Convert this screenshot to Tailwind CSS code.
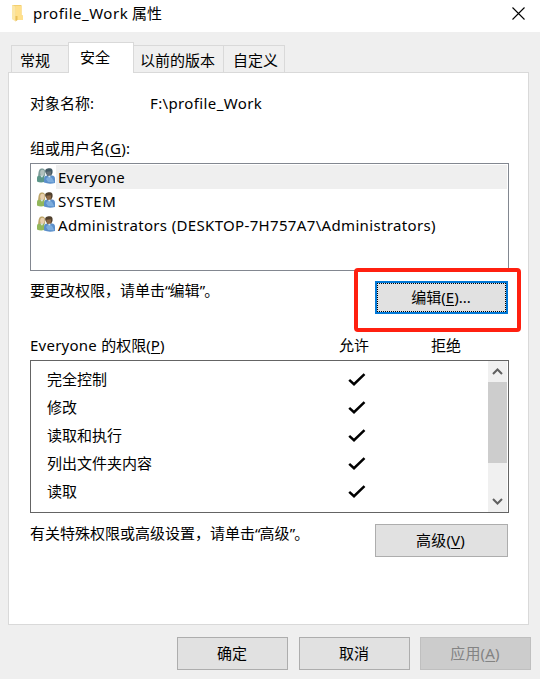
<!DOCTYPE html>
<html lang="zh-CN">
<head>
<meta charset="utf-8">
<title>profile_Work 属性</title>
<script src="https://cdn.jsdelivr.net/npm/@tailwindcss/browser@4"></script>
</head>
<body class="w-[540px] h-[679px] overflow-hidden bg-[#efefef] text-black text-[15px] leading-[20px] whitespace-nowrap font-['Noto_Sans','Noto_Sans_CJK_SC',sans-serif]">
<svg class="hidden">
  <symbol id="check" viewBox="0 0 18 14"><path d="M1.2 6.8 L6 11.2 L16.5 1.2" fill="none" stroke="#000" stroke-width="2.5"/></symbol>
  <symbol id="people" viewBox="0 0 18 17">
    <path d="M0 13.5V10Q0 7.5 3 7.2H7.5V14Q3 15 0 13.5Z" fill="var(--shirt)"/>
    <path d="M1.2 8C1.4 3 2 .5 5 .5S8.6 3 8 7.8Z" fill="var(--hair)"/>
    <ellipse cx="5.4" cy="4.8" rx="2.2" ry="3" fill="var(--face)"/>
    <path d="M3.2 7.4L5 9.8L6.4 7.4" fill="#dfe8ec"/>
    <path d="M7 14.5V11Q7.2 8 10 7.6H15Q18 8 18 11V15Q12 16.5 7 14.5Z" fill="#5b8fcb"/>
    <path d="M9 11L12 8L15 10L17.5 14.5L11 14Z" fill="#7daddd"/>
    <path d="M8.2 4C7.8 1 9.8 .3 12.3 .3S16 1.5 15.5 5L14 8H10.5Z" fill="var(--hair2)"/>
    <path d="M9.2 3.8L13.8 3.2Q14.5 5 13.5 7.5Q11.5 9.5 10 7.2Z" fill="var(--face2)"/>
    <path d="M10.8 8L12.6 9.6L14 7.6" fill="#d9e8f3"/>
  </symbol>
</svg>

<header class="flex h-8 bg-white pl-[11px]">
  <svg class="mt-[4px] w-[13px] h-[18px]" viewBox="0 0 13 18"><path d="M1 1H10.5V11.5H12V16H4L1 15Z" fill="#f3cf70"/><path d="M4.5 2H10.5V11.5H12V16H4.5Z" fill="#ffe08c"/><path d="M1 1L4.5 2.5V17.5L1 15Z" fill="#fbe7a8"/><path d="M4.5 12V17.5L6.5 16V12Z" fill="#e9bf57"/></svg>
  <h1 class="ml-[9px] mt-[3px] w-[479px]"><span class="tracking-[0.5px]">profile_Work</span> 属性</h1>
  <svg class="mt-[7px] w-[13px] h-[13px]" viewBox="0 0 13 13"><path d="M.5 .5L12.5 12.5M12.5 .5L.5 12.5" stroke="#000" stroke-width="1.1"/></svg>
</header>

<nav class="relative z-10 flex h-[41px] items-end pl-[11px] -mb-px">
  <div class="flex w-[57px] h-[28px] border border-r-0 border-[#d9d9d9] pl-[8px] pt-[4px]">常规</div>
  <div class="flex w-[66px] h-[31px] border border-b-0 border-[#d9d9d9] bg-white pl-[11px] pt-[4px]">安全</div>
  <div class="flex w-[90px] h-[28px] border border-l-0 border-[#d9d9d9] pl-[6px] pt-[4px]">以前的版本</div>
  <div class="flex w-[61px] h-[28px] border border-l-0 border-[#d9d9d9] pl-[9px] pt-[4px]">自定义</div>
</nav>

<main class="relative ml-[8px] w-[521px] h-[553px] border border-[#d9d9d9] bg-white pl-[21px] pr-[19px]">
  <div class="flex h-[65px] pt-[20px]"><span class="w-[120px]">对象名称:</span><span class="tracking-[0.37px]">F:\profile_Work</span></div>
  <div class="h-[25px]">组或用户名<span class="tracking-[0.35px]">(<u class="underline-offset-2">G</u>):</span></div>
  <section class="w-[479px] h-[108px] border border-[#828790] p-px">
    <div class="flex h-6 pl-[5px] [--shirt:#5b9688] [--hair:#7d9b98] [--face:#b1c1be] [--hair2:#435a64] [--face2:#66727a]"><svg class="mt-[3px] w-[18px] h-[17px]"><use href="#people"/></svg><span class="ml-px grow bg-[#efefef] pl-[2px] pt-[2px] tracking-[0.25px]">Everyone</span></div>
    <div class="flex h-6 pl-[5px] [--shirt:#92b75b] [--hair:#bda568] [--face:#e8cfad] [--hair2:#51402d] [--face2:#8d6845]"><svg class="mt-[3px] w-[18px] h-[17px]"><use href="#people"/></svg><span class="ml-px pl-[2px] pt-[2px] tracking-[0.5px]">SYSTEM</span></div>
    <div class="flex h-6 pl-[5px] [--shirt:#92b75b] [--hair:#bda568] [--face:#e8cfad] [--hair2:#51402d] [--face2:#8d6845]"><svg class="mt-[3px] w-[18px] h-[17px]"><use href="#people"/></svg><span class="ml-px pl-[2px] pt-[2px] tracking-[0.34px]">Administrators (DESKTOP-7H757A7\Administrators)</span></div>
  </section>
  <div class="flex h-[65px] justify-between pt-[10px] pr-px">
    <p class="-mt-px">要更改权限，请单击<span class="tracking-[-0.8px]">“</span>编辑<span class="tracking-[-0.8px]">”</span>。</p>
    <button class="w-[133px] h-[33px] border-2 border-[#0078d7] bg-[#e1e1e1]"><span class="flex h-full items-center justify-center border border-dotted border-black pb-[2px] pr-px">编辑(<u class="underline-offset-2">E</u>)...</span></button>
  </div>
  <div class="-mt-px flex h-[25px]"><span class="w-[309px]"><span class="tracking-[0.25px]">Everyone </span>的权限<span class="tracking-[0.1px]">(<u class="underline-offset-2">P</u>)</span></span><span class="w-[92px]">允许</span><span>拒绝</span></div>
  <section class="flex w-[479px] h-[153px] border border-[#646464] pr-px">
    <div class="grow pt-[5px]">
      <div class="flex h-7 items-center pl-[16px]"><span class="w-[301px] pb-[2px]">完全控制</span><svg class="w-[18px] h-[14px]"><use href="#check"/></svg></div>
      <div class="flex h-7 items-center pl-[16px]"><span class="w-[301px] pb-[2px]">修改</span><svg class="w-[18px] h-[14px]"><use href="#check"/></svg></div>
      <div class="flex h-7 items-center pl-[16px]"><span class="w-[301px] pb-[2px]">读取和执行</span><svg class="w-[18px] h-[14px]"><use href="#check"/></svg></div>
      <div class="flex h-7 items-center pl-[16px]"><span class="w-[301px] pb-[2px]">列出文件夹内容</span><svg class="w-[18px] h-[14px]"><use href="#check"/></svg></div>
      <div class="flex h-7 items-center pl-[16px]"><span class="w-[301px] pb-[2px]">读取</span><svg class="w-[18px] h-[14px]"><use href="#check"/></svg></div>
    </div>
    <div class="flex w-[19px] flex-col items-center bg-[#f0f0f0]">
      <svg class="w-[19px] h-[21px]" viewBox="0 0 19 21"><path d="M5 13L9.5 8.5L14 13" fill="none" stroke="#606060" stroke-width="2"/></svg>
      <div class="w-full h-[81px] bg-[#cdcdcd]"></div>
      <svg class="mt-[28px] w-[19px] h-[21px]" viewBox="0 0 19 21"><path d="M5 8L9.5 12.5L14 8" fill="none" stroke="#606060" stroke-width="2"/></svg>
    </div>
  </section>
  <div class="flex justify-between pt-[11px] pr-px">
    <p class="-mt-px">有关特殊权限或高级设置，请单击<span class="tracking-[-0.8px]">“</span>高级<span class="tracking-[-0.8px]">”</span>。</p>
    <button class="w-[133px] h-[33px] border border-[#adadad] bg-[#e1e1e1] pb-[2px] pr-[2px] tracking-[0.2px]">高级(<u class="underline-offset-2">V</u>)</button>
  </div>
  <div class="absolute left-[345px] top-[195px] w-[167px] h-[64px] rounded-[4px] border-4 border-[#ff2010]"></div>
</main>

<footer class="flex pl-[177px] pt-[12px]">
  <button class="w-[111px] h-[33px] border border-[#adadad] bg-[#e1e1e1] pb-[2px] pr-px">确定</button>
  <button class="ml-[11px] w-[111px] h-[33px] border border-[#adadad] bg-[#e1e1e1] pb-[2px] pr-px">取消</button>
  <button class="ml-[10px] w-[111px] h-[33px] border border-[#bfbfbf] bg-[#cccccc] pb-[2px] pr-px tracking-[0.2px] text-[#838383]">应用(<u class="underline-offset-2">A</u>)</button>
</footer>
</body>
</html>
